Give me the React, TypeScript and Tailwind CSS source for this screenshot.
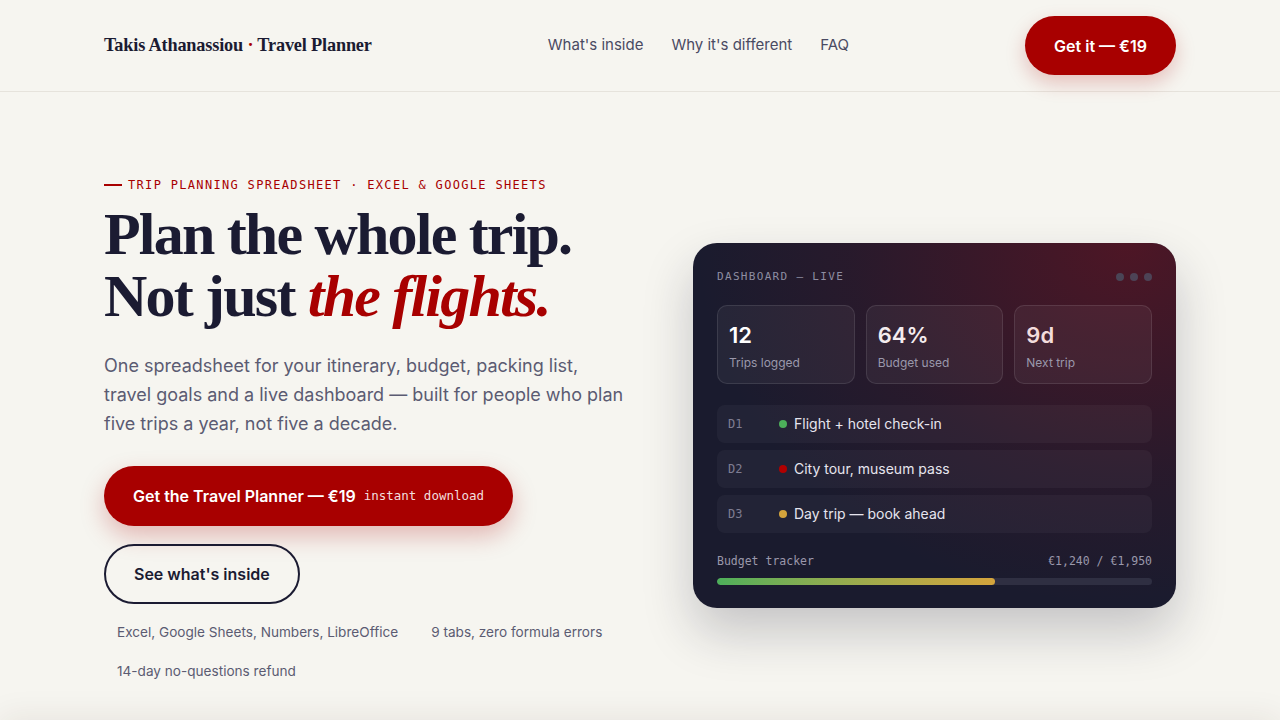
import React from "react";

const serif = { fontFamily: '"Liberation Serif", "DejaVu Serif", serif' };

export default function App() {
  return (
    <div className="min-h-screen bg-[#f6f5f0] text-[#1b1b32] overflow-hidden" style={{ fontFamily: 'Inter, "Noto Sans", sans-serif' }}>
      <header className="h-[92px] border-b border-[#e6e3dc]">
        <div className="mx-auto w-[1072px] h-full flex items-center justify-between">
          <div className="text-[18.3px] font-bold tracking-[-0.01em] text-[#1b1b32]" style={serif}>
            Takis Athanassiou <span className="text-[#a80000]">·</span> Travel Planner
          </div>
          <nav className="flex items-center gap-7 text-[15px] text-[#4a4a62]">
            <a>What's inside</a>
            <a>Why it's different</a>
            <a>FAQ</a>
          </nav>
          <button className="h-[59px] px-[29px] rounded-full bg-[#a80000] text-white text-[16px] font-semibold shadow-[0_8px_20px_rgba(168,0,0,0.22)]">
            Get it — €19
          </button>
        </div>
      </header>

      <main className="mx-auto w-[1072px] flex items-center justify-between pt-[84px]">
        <div className="w-[540px]">
          <div className="flex items-center gap-[6px] text-[12px] tracking-[0.11em] text-[#a80000]" style={{ fontFamily: '"DejaVu Sans Mono", monospace' }}>
            <span className="inline-block w-[18px] h-[2px] bg-[#a80000]" />
            TRIP PLANNING SPREADSHEET · EXCEL &amp; GOOGLE SHEETS
          </div>
          <h1 className="mt-[9px] text-[60px] leading-[62px] font-bold tracking-[-0.03em] text-[#1b1b32]" style={serif}>
            Plan the whole trip.
            <br />
            Not just <em className="text-[#a80000] italic">the flights.</em>
          </h1>
          <p className="mt-[24px] text-[18px] leading-[29px] text-[#5b5b72] w-[525px]">
            One spreadsheet for your itinerary, budget, packing list, travel goals and a live dashboard — built for people who plan five trips a year, not five a decade.
          </p>
          <div className="mt-[28px] flex flex-col items-start gap-[18px]">
            <button className="h-[60px] pl-[29px] pr-[29px] rounded-full bg-[#a80000] text-white flex items-center gap-[8px] shadow-[0_10px_24px_rgba(168,0,0,0.25)]">
              <span className="text-[16px] font-semibold">Get the Travel Planner — €19</span>
              <span className="text-[12.5px] text-[#f3dede]" style={{ fontFamily: '"DejaVu Sans Mono", monospace' }}>instant download</span>
            </button>
            <button className="h-[60px] px-[28px] rounded-full border-2 border-[#1b1b32] text-[16px] font-semibold text-[#1b1b32]">
              See what's inside
            </button>
          </div>
          <ul className="mt-[10px] flex flex-wrap gap-x-[7px] gap-y-[3px] text-[13.6px] text-[#5b5b72]">
            <li className="px-[13px] py-[8px] leading-[20px]">Excel, Google Sheets, Numbers, LibreOffice</li>
            <li className="px-[13px] py-[8px] leading-[20px]">9 tabs, zero formula errors</li>
            <li className="px-[13px] py-[8px] leading-[20px]">14-day no-questions refund</li>
          </ul>
        </div>

        <div className="relative w-[483px] rounded-[24px] overflow-hidden bg-[#1a1b2e] shadow-[0_24px_50px_rgba(27,27,50,0.22)] -mt-[14px]">
          <div className="absolute inset-0 bg-[radial-gradient(ellipse_at_90%_0%,rgba(120,18,30,0.55),rgba(120,18,30,0.15)_45%,transparent_70%)]" />
          <div className="relative px-[24px] pt-[26px] pb-[23px]">
            <div className="flex items-center justify-between">
              <div className="text-[11px] tracking-[0.12em] text-[#8e8ea2]" style={{ fontFamily: '"DejaVu Sans Mono", monospace' }}>DASHBOARD — LIVE</div>
              <div className="flex gap-[6px]">
                <span className="w-[8px] h-[8px] rounded-full bg-[#4a4556]" />
                <span className="w-[8px] h-[8px] rounded-full bg-[#4d4356]" />
                <span className="w-[8px] h-[8px] rounded-full bg-[#4d4356]" />
              </div>
            </div>
            <div className="mt-[19px] grid grid-cols-3 gap-[11px]">
              {[
                ["12", "Trips logged", "text-white"],
                ["64%", "Budget used", "text-[#f4ecee]"],
                ["9d", "Next trip", "text-[#f3dcdc]"],
              ].map(([n, l, c]) => (
                <div key={l} className="h-[79px] rounded-[10px] border border-white/10 bg-white/[0.05] px-[11px] pt-[15px]">
                  <div className={`text-[22px] leading-[28px] font-semibold ${c}`}>{n}</div>
                  <div className="mt-[5px] text-[12px] text-[#9a98ab]">{l}</div>
                </div>
              ))}
            </div>
            <div className="mt-[21px] flex flex-col gap-[7px]">
              {[
                ["D1", "bg-[#4caf5a]", "Flight + hotel check-in"],
                ["D2", "bg-[#b00000]", "City tour, museum pass"],
                ["D3", "bg-[#d4a43c]", "Day trip — book ahead"],
              ].map(([d, c, t]) => (
                <div key={d} className="h-[38px] rounded-[8px] bg-white/[0.04] flex items-center pl-[11px]">
                  <span className="w-[51px] text-[12px] text-[#7e7d92]" style={{ fontFamily: '"DejaVu Sans Mono", monospace' }}>{d}</span>
                  <span className={`w-[8px] h-[8px] rounded-full ${c}`} />
                  <span className="ml-[7px] text-[14px] text-[#e6e5ee]">{t}</span>
                </div>
              ))}
            </div>
            <div className="mt-[20px] flex justify-between text-[11.5px] text-[#9a98ab]" style={{ fontFamily: '"DejaVu Sans Mono", monospace' }}>
              <span>Budget tracker</span>
              <span>€1,240 / €1,950</span>
            </div>
            <div className="mt-[8px] h-[7px] rounded-full bg-[#2f2f42] overflow-hidden">
              <div className="h-full rounded-full bg-gradient-to-r from-[#4caf5a] to-[#d4a43c]" style={{ width: "64%" }} />
            </div>
          </div>
        </div>
      </main>

      <div className="mt-[40px] h-[200px] bg-[#f6f5f0] shadow-[0_-12px_30px_rgba(60,40,20,0.08)]" />
    </div>
  );
}
